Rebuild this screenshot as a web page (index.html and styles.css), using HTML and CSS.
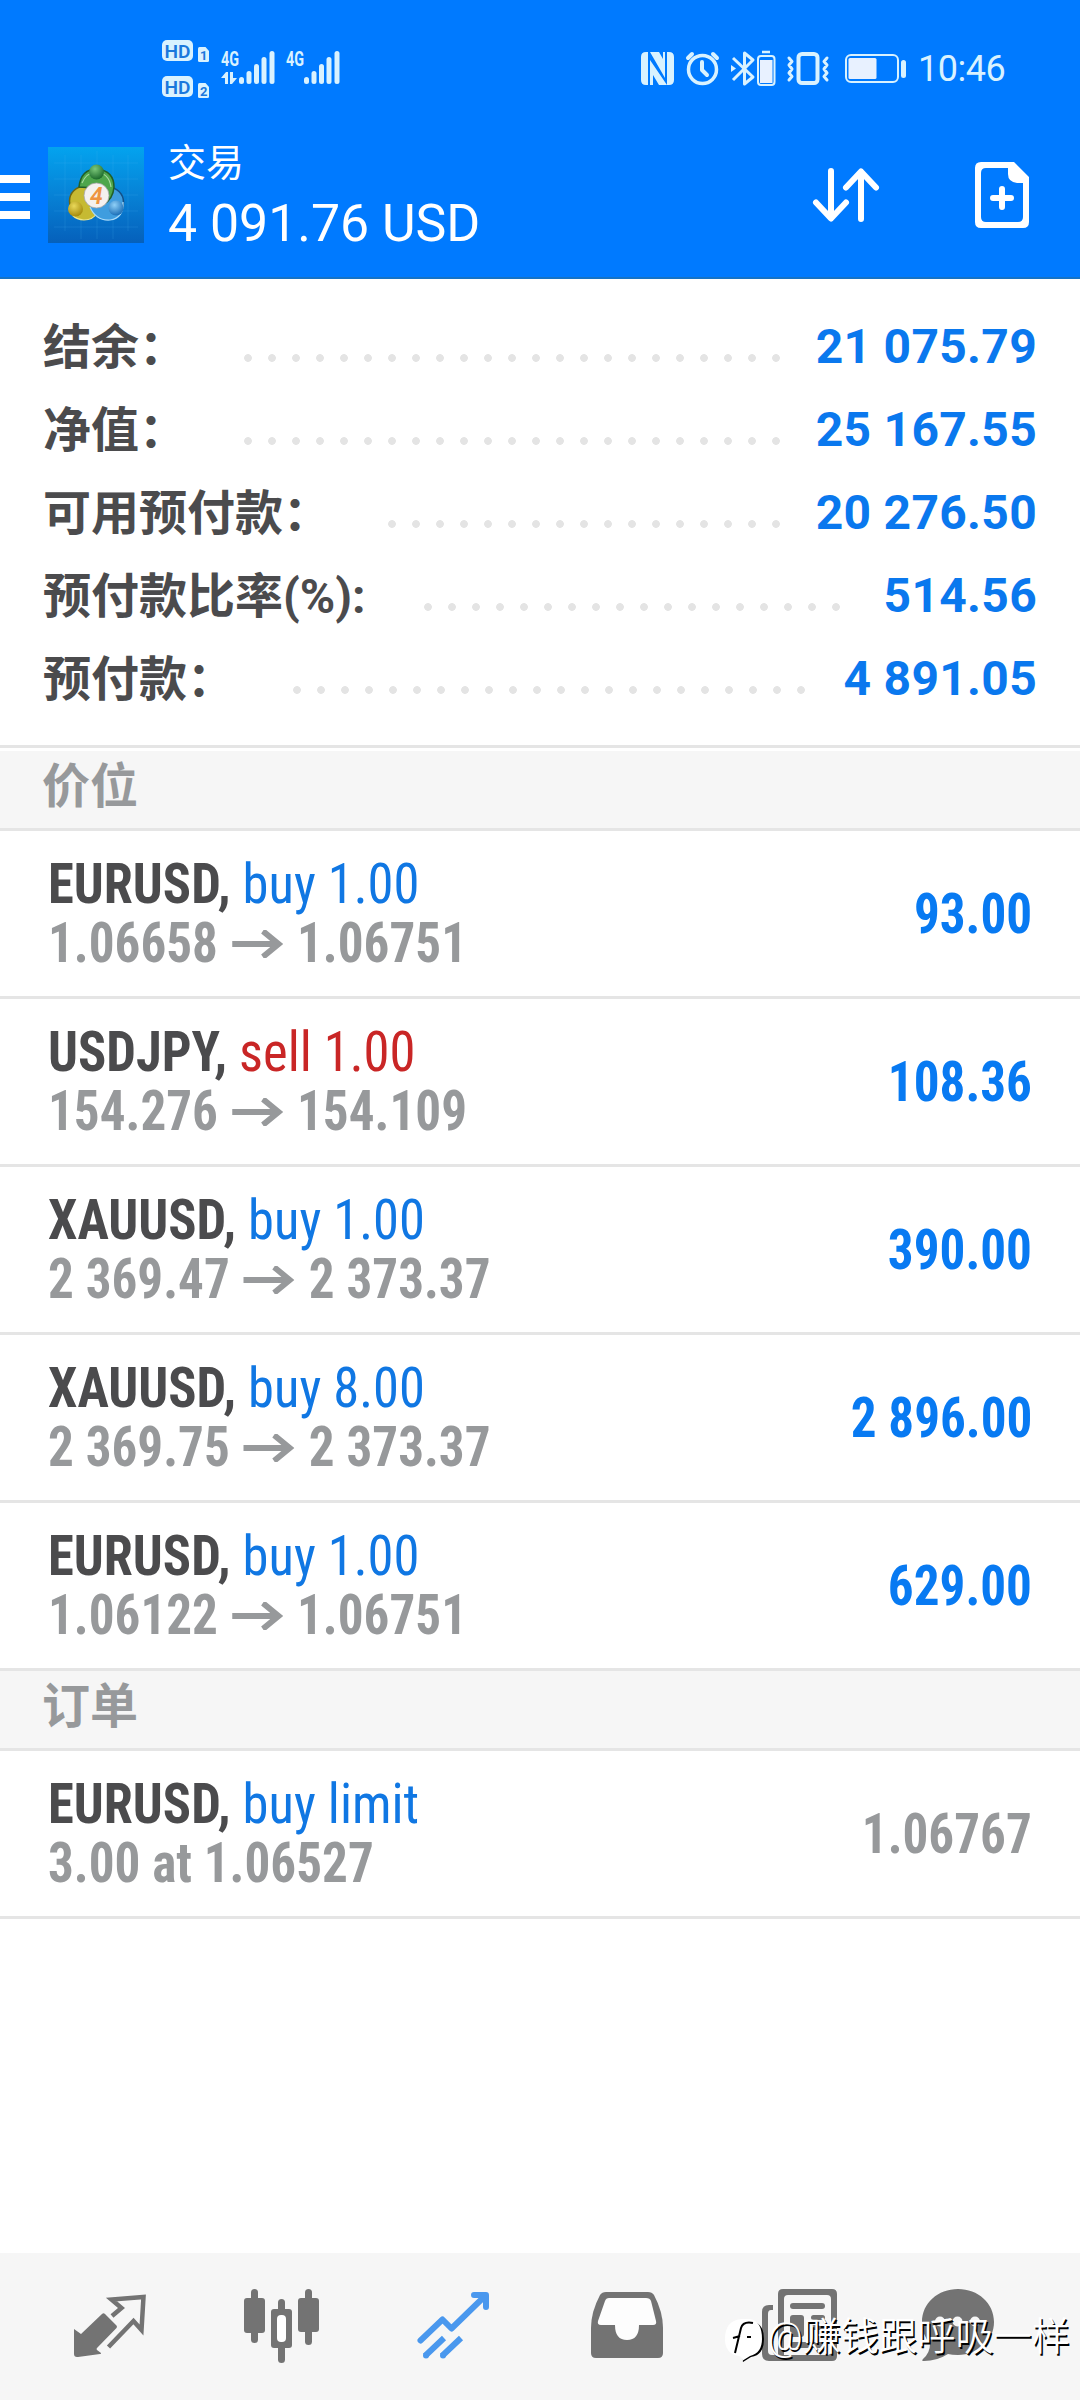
FILE: index.html
```html
<!DOCTYPE html>
<html lang="zh-CN">
<head>
<meta charset="utf-8">
<title>交易</title>
<link rel="stylesheet" href="styles.css">
</head>
<body>
<div class="screen">
  <header class="header">
    <div class="status">
      <svg class="status-left" viewBox="157 35 190 68" width="190" height="68">
        <g fill="#d9f2ff">
          <rect x="162" y="40" width="31" height="21" rx="5"/>
          <rect x="162" y="76" width="31" height="21" rx="5"/>
          <path d="M199.500 47h6l3.500 4v9.500q0 1.500-1.500 1.500h-8q-1.500 0-1.500-1.500v-12q0-1.500 1.500-1.500z"/>
          <path d="M199.500 83h6l3.500 4v9.500q0 1.500-1.500 1.500h-8q-1.500 0-1.500-1.500v-12q0-1.500 1.500-1.500z"/>
          <rect x="239" y="77" width="5" height="7" rx="2.500"/><rect x="246.500" y="71" width="5" height="13" rx="2.500"/><rect x="254" y="64" width="5" height="20" rx="2.500"/><rect x="261.500" y="57" width="5" height="27" rx="2.500"/><rect x="269.500" y="51" width="5" height="33" rx="2.500"/>
          <rect x="304" y="77" width="5" height="7" rx="2.500"/><rect x="311.500" y="71" width="5" height="13" rx="2.500"/><rect x="319" y="64" width="5" height="20" rx="2.500"/><rect x="326.500" y="57" width="5" height="27" rx="2.500"/><rect x="334.500" y="51" width="5" height="33" rx="2.500"/>
          <path d="M221 78l5-6h2v12h-3v-6zM230 72h3v6h4l-5 6h-2z"/>
        </g>
        <g class="hd"><text x="164.500" y="57.500" textLength="26" lengthAdjust="spacingAndGlyphs">HD</text><text x="164.500" y="93.500" textLength="26" lengthAdjust="spacingAndGlyphs">HD</text></g>
        <g class="sim"><text x="200" y="60">1</text><text x="200" y="96">2</text></g>
        <g class="net"><text x="221" y="66" textLength="18" lengthAdjust="spacingAndGlyphs">4G</text><text x="286" y="66" textLength="18" lengthAdjust="spacingAndGlyphs">4G</text></g>
      </svg>
      <svg class="status-right" viewBox="636 35 274 68" width="274" height="68" fill="none" stroke="#d9f2ff">
        <path fill="#d9f2ff" stroke="none" d="M646 52h2v33h-2q-5 0-5-5v-23q0-5 5-5zM650 85V60l17 25h-8l-6-10v10zM665 52v26l-15-26h9l4 7v-7zM667 52h2q5 0 5 5v23q0 5-5 5h-2z"/>
        <circle cx="702.500" cy="69.500" r="14" stroke-width="3.500"/><path stroke-width="4" stroke-linecap="round" stroke-linejoin="round" d="M702 62v8l5 5M688 58l4-4M717 58l-4-4"/>
        <path stroke-width="3" stroke-linejoin="round" d="M733 58l20 19-8.500 7V53l8.500 7-20 20"/><path fill="#d9f2ff" stroke="none" d="M731 65l5 3.500-5 3.500z"/>
        <rect x="758" y="56" width="16.500" height="29" rx="3" stroke-width="2"/><path stroke-width="2.500" d="M762 52h8"/><rect x="760" y="60" width="12.500" height="23" fill="#e8f1ff" stroke="none"/>
        <rect x="798.500" y="54" width="19" height="29" rx="3.500" stroke-width="4"/><path stroke-width="3" stroke-linecap="round" stroke-linejoin="round" d="M789 58l3 3.500-3 3.500 3 4-3 4 3 3.500-3 3.500M827 58l-3 3.500 3 3.500-3 4 3 4-3 3.500 3 3.500"/>
        <rect x="846" y="55" width="52" height="27" rx="5" stroke-width="2"/><rect x="848.500" y="58" width="28" height="21" rx="1.500" fill="#e8f1ff" stroke="none"/><rect x="901" y="60" width="5" height="18" rx="2.500" fill="#d9f2ff" stroke="none"/>
      </svg>
      <span class="clock">10:46</span>
    </div>
    <div class="appbar">
      <div class="menu"><i></i><i></i><i></i></div>
      <svg class="logo" viewBox="0 0 96 96" width="96" height="96">
        <defs>
          <linearGradient id="sky" x1="0" y1="0" x2="0" y2="1"><stop offset="0" stop-color="#03a3ee"/><stop offset=".5" stop-color="#0782d6"/><stop offset="1" stop-color="#0560bb"/></linearGradient>
          <radialGradient id="gr" cx=".4" cy=".3" r=".7"><stop offset="0" stop-color="#7cc87a"/><stop offset="1" stop-color="#1d6b2c"/></radialGradient>
          <radialGradient id="ye" cx=".4" cy=".3" r=".7"><stop offset="0" stop-color="#e9d95a"/><stop offset="1" stop-color="#a58b0d"/></radialGradient>
          <radialGradient id="bl" cx=".4" cy=".3" r=".7"><stop offset="0" stop-color="#8fd0f7"/><stop offset="1" stop-color="#1c6fb8"/></radialGradient>
        </defs>
        <rect width="96" height="96" fill="url(#sky)"/>
        <path stroke="#4fbdf2" stroke-opacity=".22" stroke-width=".8" d="M17 8v76M33 8v84M49 4v88M65 8v84M80 8v76M6 16h84M6 32h84M6 48h84M6 64h84M6 80h84"/>
        <circle cx="36" cy="54" r="14.500" fill="#c6ba32" stroke="#6d6612" stroke-width="1.500"/>
        <circle cx="61" cy="55" r="14.500" fill="#3f9ddf" stroke="#145087" stroke-width="1.500"/>
        <path d="M31 40q2-18 18-18 17 2 17 18-1 12-10 17l-9-16z" fill="#4ea64c" stroke="#215f28" stroke-width="1.500"/>
        <path d="M34 36q4-10 14-11 13 1 15 15" fill="none" stroke="#a6d9a0" stroke-width="1.200"/>
        <path d="M22 58q-1 14 14 15 9 0 13-7" fill="#c6ba32" stroke="#eee68a" stroke-width="1.200"/>
        <path d="M42 60q6 14 20 13 14-2 13-18" fill="#3f9ddf" stroke="#a9daf8" stroke-width="1.200"/>
        <circle cx="48.500" cy="25" r="7.500" fill="url(#gr)"/><circle cx="27.500" cy="62" r="7.500" fill="url(#ye)"/><circle cx="68" cy="61" r="7.500" fill="url(#bl)"/>
        <circle cx="48.500" cy="48.500" r="12.500" fill="#f4f1ef" stroke="#a3a5a6" stroke-width=".8"/>
        <text class="four" x="42" y="56.500">4</text>
      </svg>
      <div class="account"><div class="title">交易</div><div class="balance">4 091.76 USD</div></div>
      <svg class="sort" viewBox="810 160 72 72" width="72" height="72" fill="none" stroke="#fff" stroke-width="6" stroke-linecap="round" stroke-linejoin="round"><path d="M831 171v47M816 202.500l15 16 15-16M861 219v-47M846 187.500l15-16 15 16"/></svg>
      <svg class="doc" viewBox="970 156 64 78" width="64" height="78"><path fill="#fff" fill-rule="evenodd" d="M981 162h33l15 15v45q0 6-6 6h-42q-6 0-6-6v-54q0-6 6-6zM986 168q-5 0-5 5v44q0 5 5 5h32q5 0 5-5v-34h-6q-9-1-9-9v-6z"/><path stroke="#fff" stroke-width="6" stroke-linecap="round" d="M993 198h18M1002 189v18"/></svg>
    </div>
  </header>

  <section class="summary">
    <div class="sum"><span class="label">结余：</span><i class="dots" style="width:552px"></i><b class="value">21 075.79</b></div>
    <div class="sum"><span class="label">净值：</span><i class="dots" style="width:552px"></i><b class="value">25 167.55</b></div>
    <div class="sum"><span class="label">可用预付款：</span><i class="dots" style="width:408px"></i><b class="value">20 276.50</b></div>
    <div class="sum"><span class="label">预付款比率(%):</span><i class="dots gap-l" style="width:432px"></i><b class="value">514.56</b></div>
    <div class="sum"><span class="label">预付款：</span><i class="dots gap-m" style="width:528px"></i><b class="value">4 891.05</b></div>
  </section>

  <h2 class="band band-first">价位</h2>
  <div class="trade"><div><div class="pair"><b>EURUSD,</b> <span class="buy">buy 1.00</span></div><div class="price">1.06658<svg class="arrow" viewBox="0 0 55 28"><path d="M0 14h51M33 1l17 13-17 13"/></svg>1.06751</div></div><b class="profit">93.00</b></div>
  <div class="trade"><div><div class="pair"><b>USDJPY,</b> <span class="sell">sell 1.00</span></div><div class="price">154.276<svg class="arrow" viewBox="0 0 55 28"><path d="M0 14h51M33 1l17 13-17 13"/></svg>154.109</div></div><b class="profit">108.36</b></div>
  <div class="trade"><div><div class="pair"><b>XAUUSD,</b> <span class="buy">buy 1.00</span></div><div class="price">2 369.47<svg class="arrow" viewBox="0 0 55 28"><path d="M0 14h51M33 1l17 13-17 13"/></svg>2 373.37</div></div><b class="profit">390.00</b></div>
  <div class="trade"><div><div class="pair"><b>XAUUSD,</b> <span class="buy">buy 8.00</span></div><div class="price">2 369.75<svg class="arrow" viewBox="0 0 55 28"><path d="M0 14h51M33 1l17 13-17 13"/></svg>2 373.37</div></div><b class="profit">2 896.00</b></div>
  <div class="trade"><div><div class="pair"><b>EURUSD,</b> <span class="buy">buy 1.00</span></div><div class="price">1.06122<svg class="arrow" viewBox="0 0 55 28"><path d="M0 14h51M33 1l17 13-17 13"/></svg>1.06751</div></div><b class="profit">629.00</b></div>
  <h2 class="band">订单</h2>
  <div class="trade"><div><div class="pair"><b>EURUSD,</b> <span class="buy">buy limit</span></div><div class="price">3.00 at 1.06527</div></div><b class="profit quote">1.06767</b></div>

  <nav class="nav">
    <svg viewBox="24 2253 172 147"><path d="M102 2314q1.500-1.500 3 0l11.500 11.500q1 1 0 2.500l-19.500 20q-1 1 0 2l4 3q.5 1-1 1l-22 3q-4 .5-4-3v-25l7 5z"/><path class="line" d="M112 2316l9.500-8-10-8.500 32-2.500-2 33-8-9-25 26"/></svg>
    <svg viewBox="196 2253 172 147"><rect x="251" y="2289" width="7" height="54" rx="3.500"/><rect x="244" y="2298" width="21" height="35" rx="3"/><rect x="305" y="2289" width="7" height="56" rx="3.500"/><rect x="298" y="2298" width="21" height="34" rx="3"/><rect x="278" y="2299" width="7" height="64" rx="3.500"/><rect x="271" y="2309" width="21" height="39" rx="3"/><rect x="277" y="2315" width="9" height="27" rx="4" fill="#fff"/></svg>
    <svg class="active" viewBox="368 2253 172 147"><path d="M420.500 2340.500l22-21 9 9 34-33M474 2295h12v12"/><path stroke-linecap="butt" d="M425 2356l19-18M442 2356l19-18"/><circle cx="426" cy="2355.500" r="3"/><circle cx="443" cy="2355.500" r="3"/></svg>
    <svg viewBox="540 2253 172 147"><path d="M606 2292h42q4 0 6 3 9 17 9 33v25q0 5-5 5h-62q-5 0-5-5v-25q0-16 9-33 2-3 6-3z"/><path fill="#fdfdfd" d="M609 2298h37q4 0 5 3l5 20q1 4-3 4h-14q0 15-12 15-12 0-12-15h-14q-4 0-3-4l7-20q1-3 4-3z"/></svg>
    <svg viewBox="712 2253 172 147"><path fill-rule="evenodd" d="M783 2289h49q5 0 5 5v62q0 5-5 5h-63q-7 0-7-7v-42q0-7 7-7h4v5h-2q-3 0-3 4v37q0 4 4 4h6v-61q0-5 5-5zM788 2295q-4 0-4 4v56h43q4 0 4-4v-52q0-4-4-4z"/><rect x="790" y="2303" width="35" height="6" rx="3"/><rect x="790" y="2315" width="14" height="22" rx="3"/><rect x="811" y="2315" width="14" height="5" rx="2.500"/><rect x="811" y="2325" width="14" height="5" rx="2.500"/><rect x="790" y="2342" width="35" height="6" rx="3"/></svg>
    <svg viewBox="884 2253 172 147"><path d="M958 2289c20 0 36 14 36 33s-16 33-36 33q-6 0-10-1-11 7-24 7-3 0-1-2 7-6 7-15-8-10-8-22c0-19 16-33 36-33z"/><g fill="#f6f6f6"><circle cx="940" cy="2321.500" r="5"/><circle cx="957.500" cy="2321.500" r="5"/><circle cx="975" cy="2321.500" r="5"/></g></svg>
  </nav>

  <div class="watermark">
    <svg viewBox="722 2316 46 50" width="46" height="50"><path fill="#000" d="M748 2323q16 0 16 18 0 16-13 18l-8 5-1-5 16-20z"/><path fill="#fff" d="M742 2321h8q12 2 12 20 0 14-12 17l-8 5q1-4-3-5-14-2-14-17 0-19 17-20z"/><path fill="none" stroke="#000" stroke-width="2" d="M735 2355l6-25q2-7 12-5M733 2340l7-2M747 2339h4"/></svg>
    <span>@赚钱跟呼吸一样</span>
  </div>
</div>
</body>
</html>
```
FILE: styles.css
```css
* { box-sizing: border-box; }
body { margin: 0; background: #fff; font-family: Roboto, "Noto Sans CJK SC", sans-serif; }
svg { display: block; flex: none; }
.screen { position: relative; width: 1080px; height: 2400px; display: flex; flex-direction: column; overflow: hidden; background: #fff; }

.header { height: 279px; flex: none; background: #007aff; border-bottom: 2px solid #1573c6; color: #fff; }
.status { height: 110px; display: flex; align-items: flex-start; padding: 35px 75px 0 157px; }
.status-right { margin-left: auto; }
.clock { width: 87px; margin-left: 8px; font-size: 36px; line-height: 69px; color: #d9f2ff; white-space: nowrap; letter-spacing: -.5px; }
.hd text { font-size: 19px; font-weight: 600; fill: #1b78dc; }
.sim text { font-size: 13px; font-weight: 700; fill: #1b78dc; }
.net text { font-size: 21px; font-weight: 700; fill: #d9f2ff; }
.appbar { height: 167px; display: flex; align-items: flex-start; padding-right: 46px; }
.menu { width: 30px; padding-top: 65px; display: flex; flex-direction: column; gap: 10px; }
.menu i { height: 8px; background: #fff; }
.logo { margin: 37px 0 0 18px; }
.four { font-size: 23px; font-style: italic; font-weight: 600; fill: #ee9440; }
.account { margin-left: 24px; padding-top: 28px; white-space: nowrap; }
.title { font-size: 38px; line-height: 50px; }
.balance { font-size: 51.800px; line-height: 71px; }
.sort { margin: 50px 0 0 auto; }
.doc { margin: 46px 0 0 88px; }

.summary { height: 469px; flex: none; padding: 26px 43px 0 43px; border-bottom: 3px solid #e5e5e5; }
.sum { height: 83px; display: flex; align-items: center; font-size: 48px; line-height: 83px; white-space: nowrap; }
.label { width: 0; flex: 1; padding-top: 1px; color: #4b4b4d; font-weight: 700; }
.dots { flex: none; height: 8px; margin: 22px 28px 0 0; background: radial-gradient(circle at 12px 4px, #e4e4e4 3.500px, transparent 4.200px) 0 0 / 24px 8px; }
.gap-m { margin-right: 31px; }
.gap-l { margin-right: 36px; }
.value { color: #0a78ee; font-weight: 700; text-align: right; letter-spacing: .3px; }

.band { flex: none; height: 80px; margin: 0; padding: 0 42px; background: #f6f6f6; border-bottom: 3px solid #e5e5e5; font-size: 48px; line-height: 71px; font-weight: 700; color: #97999b; }
.band-first { margin-top: 3px; }

.trade { flex: none; height: 168px; padding: 24px 48px 0 48px; border-bottom: 3px solid #e5e5e5; display: flex; justify-content: space-between; font-family: "Roboto Condensed", Roboto, sans-serif; font-stretch: 75%; font-size: 55px; line-height: 59px; white-space: nowrap; }
.pair { transform: scaleX(.955); transform-origin: 0 0; }
.pair b { color: #4b4b4d; }
.buy { color: #1077e3; }
.sell { color: #c92626; }
.price { display: flex; align-items: center; color: #97999b; font-weight: 700; transform: scaleX(.93); transform-origin: 0 0; }
.arrow { width: 55px; height: 28px; margin: 0 15px; fill: none; stroke: #97999b; stroke-width: 6; }
.profit { line-height: 119px; color: #087af2; transform: scaleX(.93); transform-origin: 100% 0; }
.quote { color: #97999b; }

.nav { margin-top: auto; flex: none; height: 147px; padding: 0 24px; background: #f6f6f6; display: grid; grid-template-columns: repeat(6, 172px); fill: #737373; }
.nav .line { fill: none; stroke: #737373; stroke-width: 4.500; }
.nav .active { fill: #4a98ee; stroke: #4a98ee; stroke-width: 6; stroke-linecap: round; stroke-linejoin: round; }
.nav .active path { fill: none; }
.nav .active circle { stroke: none; }
.watermark { position: absolute; right: 10px; bottom: 35px; display: flex; align-items: center; color: #fff; font-size: 38.200px; font-weight: 350; line-height: 50px; text-shadow: 1.500px 1.500px 0 #000; white-space: nowrap; }
.watermark span { padding-bottom: 3px; }
```
